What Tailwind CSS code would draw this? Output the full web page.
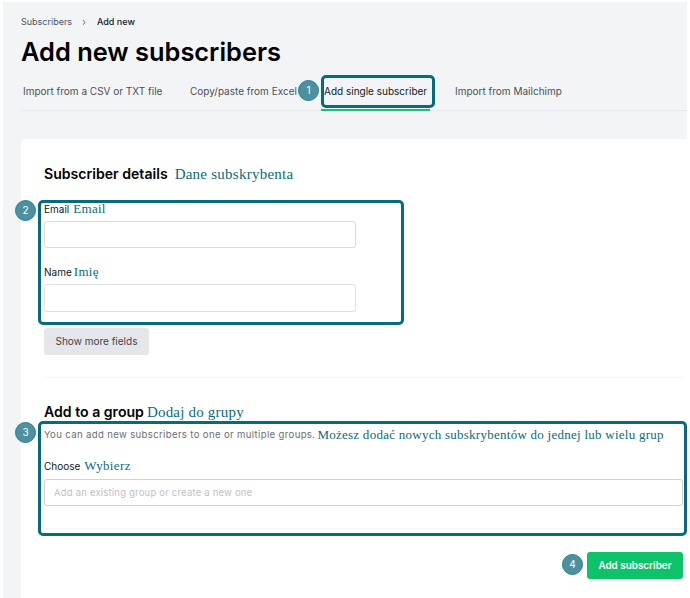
<!DOCTYPE html>
<html lang="en">
<head>
<meta charset="utf-8">
<title>Add new subscribers</title>
<script src="https://cdn.jsdelivr.net/npm/@tailwindcss/browser@4"></script>
</head>
<body class="bg-white">
<div class="relative h-[598px] w-[690px] overflow-hidden bg-white pt-0.5 pl-[3px] font-['Inter',sans-serif] whitespace-nowrap">
  <main class="flex h-[596px] w-[684px] flex-col bg-[#f2f4f5] pl-[18px]">
    <nav class="mt-3 flex h-4 items-center text-[9px] text-gray-600">
      <span class="w-[61px]">Subscribers</span>
      <svg class="mr-[11px] h-[5px] w-1" viewBox="0 0 4 5" fill="none" stroke="#555b63" stroke-width=".9"><path d="M.8.2 3.2 2.5.8 4.8"/></svg>
      <span class="font-medium text-gray-900">Add new</span>
    </nav>
    <h1 class="mt-1 flex h-9 items-center text-[25.4px] font-semibold text-black">Add new subscribers</h1>
    <div class="mt-2 flex h-[33px] border-b border-[#e7eaec] text-[10px] text-[#4b5058]">
      <a class="ml-[2px] flex h-[26px] w-[167px] items-center">Import from a CSV or TXT file</a>
      <a class="flex h-[26px] w-[131px] items-center">Copy/paste from Excel</a>
      <a class="flex h-[33px] w-[109px] border-b-2 border-[#20bd78] pl-[3px] text-gray-900"><span class="flex h-[26px] items-center">Add single subscriber</span></a>
      <a class="ml-[25px] flex h-[26px] items-center">Import from Mailchimp</a>
    </div>
    <section class="mt-[28px] flex flex-1 flex-col rounded-tl-[4px] bg-white pr-1 pl-[23px]">
      <div class="mt-[23px] flex h-6 items-center gap-[7px]">
        <h2 class="text-[14.1px] font-semibold text-black">Subscriber details</h2>
        <span class="font-['Liberation_Serif',serif] text-[15px] tracking-[0.25px] text-[#086b80]">Dane subskrybenta</span>
      </div>
      <label class="mt-[15px] flex h-4 items-center gap-1 text-[10px] text-gray-900">Email <span class="font-['Liberation_Serif',serif] text-[13px] tracking-[0.3px] text-[#086b80]">Email</span></label>
      <input class="mt-1 h-[27px] w-[312px] rounded-[3px] border border-[#d9dadd]">
      <label class="mt-4 flex h-4 items-center gap-0.5 text-[10px] text-gray-900">Name <span class="font-['Liberation_Serif',serif] text-[13px] tracking-[0.3px] text-[#086b80]">Imię</span></label>
      <input class="mt-1 h-7 w-[312px] rounded-[3px] border border-[#dfe0e3]">
      <button class="mt-4 h-[27px] w-[105px] rounded-[3px] bg-[#e5e6ea] text-[10px] text-[#3f434a]">Show more fields</button>
      <div class="mt-[22px] border-t border-[#f5f6f7]"></div>
      <div class="mt-[22px] flex h-6 items-center gap-[3px]">
        <h2 class="text-[14.1px] font-semibold text-black">Add to a group</h2>
        <span class="font-['Liberation_Serif',serif] text-[15px] tracking-[0.2px] text-[#086b80]">Dodaj do grupy</span>
      </div>
      <p class="mt-px flex h-5 items-center gap-[2px] text-[9.6px] text-[#6b6e74]"><span class="tracking-[0.34px]">You can add new subscribers to one or multiple groups.</span><span class="font-['Liberation_Serif',serif] text-[13px] tracking-[0.26px] text-[#086b80]">Możesz dodać nowych subskrybentów do jednej lub wielu grup</span></p>
      <label class="mt-[13px] flex h-4 items-center gap-1 text-[10px] text-gray-900">Choose <span class="font-['Liberation_Serif',serif] text-[13px] tracking-[0.35px] text-[#086b80]">Wybierz</span></label>
      <input class="mt-[5px] h-[27px] w-[639px] rounded-[3px] border border-[#d0d1da] pl-[9px] text-[9.5px] tracking-[0.2px] placeholder:text-[#bec1c5]" placeholder="Add an existing group or create a new one">
      <div class="mt-[22px] border-t border-[#f1f4f6]"></div>
      <button class="mt-[23px] h-[27px] w-24 self-end rounded-[3px] bg-[#0dc268] text-[9.9px] font-semibold text-white">Add subscriber</button>
    </section>
  </main>

  <!-- Highlight frames and numbered steps laid over the form -->
  <div class="absolute top-[75px] left-[321px] h-[33px] w-[114px] rounded-[5px] border-3 border-[#046b80]"></div>
  <div class="absolute top-[200px] left-[38px] h-[125px] w-[366px] rounded-[5px] border-3 border-[#046b80]"></div>
  <div class="absolute top-[421px] left-[38px] h-[115px] w-[649px] rounded-[5px] border-3 border-[#046b80]"></div>
  <div class="absolute top-[80px] left-[298px] flex size-[21px] items-center justify-center rounded-full border border-[#247f91] bg-[#4d91a0] text-[10px] text-white">1</div>
  <div class="absolute top-[200px] left-[15px] flex size-[21px] items-center justify-center rounded-full border border-[#247f91] bg-[#4d91a0] text-[10px] text-white">2</div>
  <div class="absolute top-[422px] left-[15px] flex size-[21px] items-center justify-center rounded-full border border-[#247f91] bg-[#4d91a0] text-[10px] text-white">3</div>
  <div class="absolute top-[554px] left-[562px] flex size-[21px] items-center justify-center rounded-full border border-[#247f91] bg-[#4d91a0] text-[10px] text-white">4</div>
</div>
</body>
</html>
